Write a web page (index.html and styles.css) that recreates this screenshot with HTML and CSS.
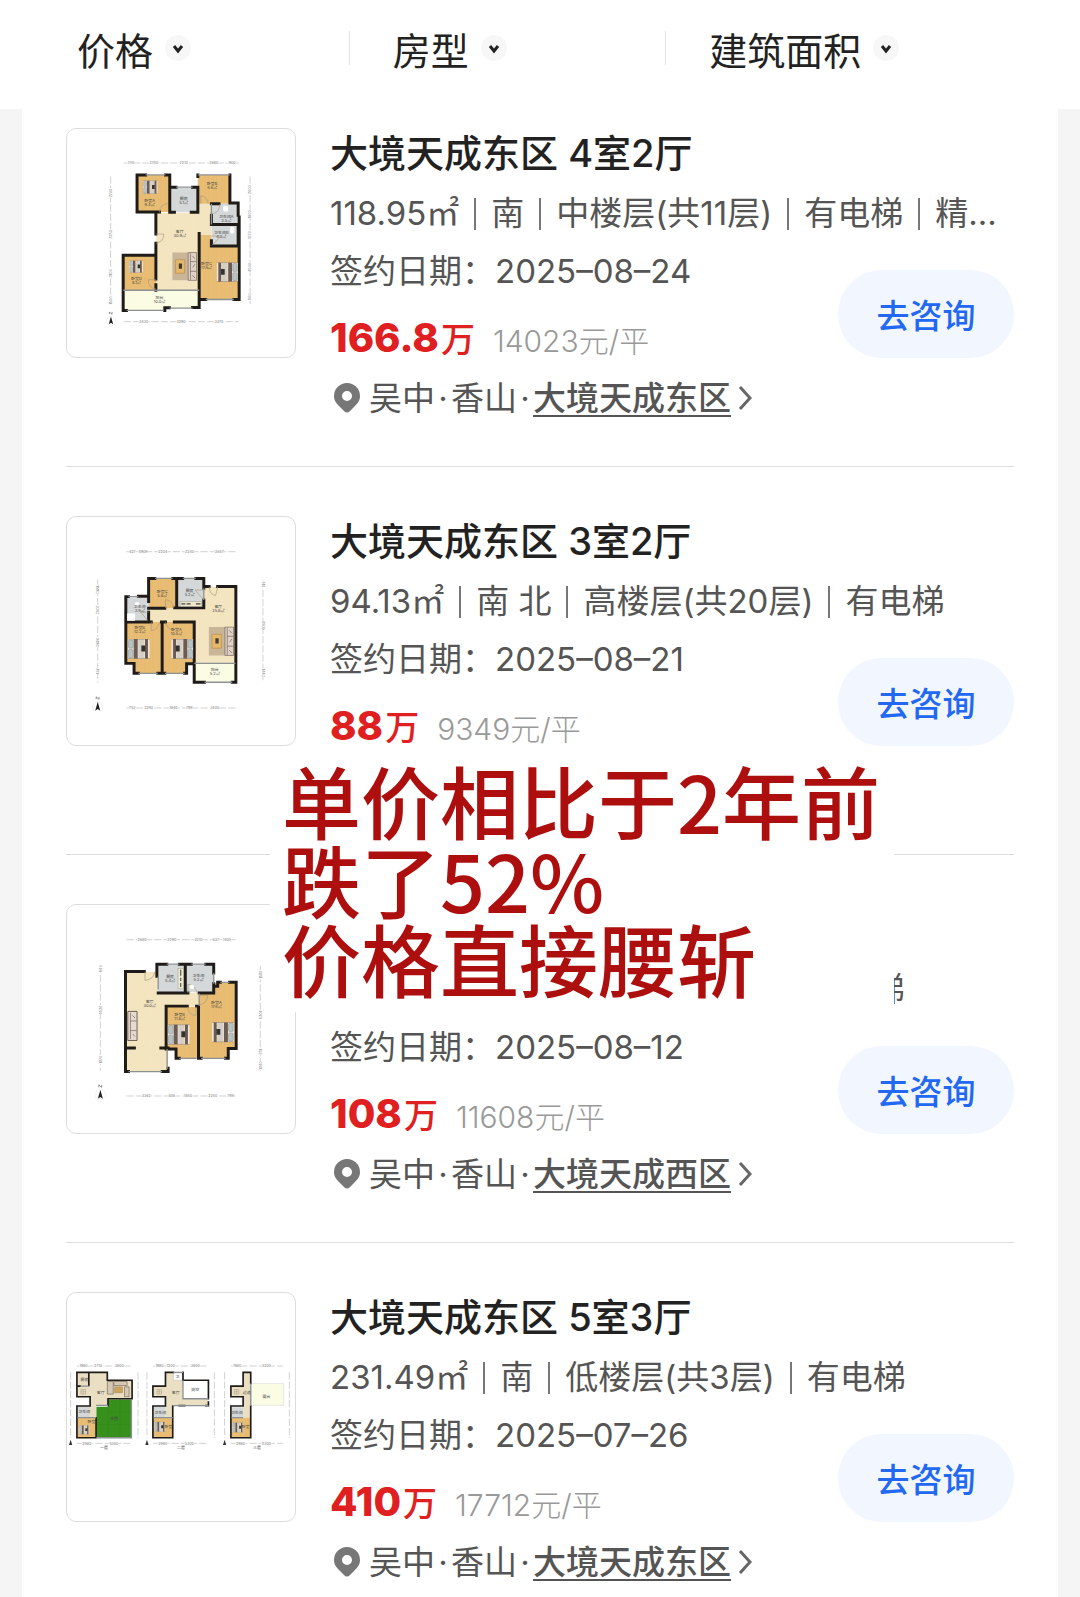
FILE: index.html
```
<!DOCTYPE html>
<html lang="zh-CN">
<head>
  <meta charset="UTF-8" />
  <meta name="viewport" content="width=device-width, initial-scale=1.0" />
  <title>大境天成 - 成交记录</title>
  <link rel="stylesheet" href="styles.css">
</head>
<body>
  <svg class="defs" aria-hidden="true">
    <defs>
      <pattern id="wood" width="24" height="24" patternUnits="userSpaceOnUse">
        <rect width="24" height="24" fill="#e9be74" />
        <path d="M0 0V24M8 0V24M16 0V24" stroke="#deb064" stroke-width="1" />
      </pattern>
      <pattern id="tile" width="28" height="28" patternUnits="userSpaceOnUse">
        <rect width="28" height="28" fill="#f4e5c1" />
        <path d="M0 0H28M0 0V28" stroke="#efdeb4" stroke-width="1" />
      </pattern>
      <symbol id="bed" viewBox="0 0 66 60">
        <rect width="66" height="60" fill="#ece7e0" />
        <rect x="2" y="3" width="14" height="25" rx="4" fill="#b8c3c6" stroke="#6d6f70" />
        <rect x="2" y="32" width="14" height="25" rx="4" fill="#b8c3c6" stroke="#6d6f70" />
        <path d="M18 0h12v60H18zM52 0h9v60h-9z" fill="#6b5b51" />
        <path d="M32 0h18v60H32z" fill="#d8cfc4" />
        <path d="M41 20h12v18H41z" fill="#333" />
        <path d="M0 0H66M0 60H66" stroke="#6b5b51" stroke-width="2" />
      </symbol>
      <symbol id="sofa" viewBox="0 0 76 90">
        <path d="M0 2h50v86H0z" fill="#c9b597" />
        <path d="M10 24h28v42H10z" fill="#e5b96d" stroke="#b98b45" stroke-width="2" />
        <path d="M20 36h10v16H20z" fill="#443a32" />
        <path d="M49 2h26v86H49z" fill="#e1d2c6" stroke="#6e5e55" stroke-width="2" />
        <path d="M56 4v82M56 30h18M56 60h18M62 12l8 9M62 72l8 9M70 38l-7 10" stroke="#6e5e55" stroke-width="2" fill="none" />
      </symbol>
      <symbol id="north" viewBox="0 0 40 52">
        <circle cx="20" cy="34" r="17" fill="none" stroke="#ddd" />
        <path d="M20 18l8 28-8-5-8 5z" fill="#222" />
        <path d="M15 10V2l9 8V2" fill="none" stroke="#555" stroke-width="2" />
      </symbol>
    </defs>
  </svg>

  <header class="filters">
    <button class="filter" type="button">价格
      <span class="filter-arrow"><svg viewBox="0 0 26 26"><path d="M9 11l4 5 4-5" /></svg></span>
    </button>
    <button class="filter" type="button">房型
      <span class="filter-arrow"><svg viewBox="0 0 26 26"><path d="M9 11l4 5 4-5" /></svg></span>
    </button>
    <button class="filter" type="button">建筑面积
      <span class="filter-arrow"><svg viewBox="0 0 26 26"><path d="M9 11l4 5 4-5" /></svg></span>
    </button>
  </header>

  <main class="list">
    <article class="item">
      <div class="thumb">
        <svg viewBox="20 24 690 690" role="img" aria-label="4室2厅户型图">
          <path class="dim" d="M192 127H540M192 607H540M152 168V560M574 168V560" />
          <g class="dim-text">
            <text x="214" y="131">1110</text><text x="283" y="131">2740</text><text x="373" y="131">2210</text><text x="464" y="131">2680</text><text x="520" y="131">900</text>
            <text x="252" y="611">3430</text><text x="365" y="611">3290</text><text x="480" y="611">3370</text>
            <text transform="translate(156 218) rotate(-90)">2700</text><text transform="translate(156 343) rotate(-90)">3750</text><text transform="translate(156 461) rotate(-90)">3100</text><text transform="translate(156 543) rotate(-90)">1500</text>
            <text transform="translate(578 208) rotate(-90)">2400</text><text transform="translate(578 282) rotate(-90)">1900</text><text transform="translate(578 345) rotate(-90)">1770</text><text transform="translate(578 443) rotate(-90)">4500</text><text transform="translate(578 532) rotate(-90)">900</text>
          </g>
          <path fill="url(#tile)" d="M290 278H418V250H457V345H420V512H290z" />
          <path fill="url(#wood)" d="M232 163H330V275H232zM416 163H513V250H416zM190 408H290V512H190zM420 375H540V540H420zM420 345H457V378H420z" />
          <path fill="#d5d8d9" d="M332 202H416V276H332zM458 250H540V313H458zM458 316H540V376H458z" />
          <path fill="#fbfce4" d="M190 513H420V566H312V573H190z" />
          <path class="wall" d="M258 163H232V275H300M318 163H331V276H345M331 200H350M400 200H416V276H396M416 168V163M513 163V248H538V285M457 250H480M457 313H538V378H457V362M457 313V285M289 276V342M289 370V406H190V573H200M289 406V478M289 495V512M420 340V564H400M316 573V565H330M541 290V540H525M420 540H440" />
          <path class="thin" d="M258 163H318M350 200H400M416 163H513M190 512H420M200 573H312M330 566H400M440 540H525M457 250V313" />
          <path class="door" d="M289 342h24q0 24-24 28M300 276q2-26 26-26M425 250v-24q20 2 22 24M462 280q20-4 20-28M457 348h30l-28 28M289 480h-24q2 26 24 28" />
          <use href="#bed" x="240" y="180" width="64" height="40" />
          <use href="#bed" x="196" y="422" width="66" height="37" />
          <use href="#bed" transform="translate(538 428) scale(-1 1)" width="66" height="58" />
          <use href="#sofa" x="338" y="396" width="76" height="88" />
          <rect x="492" y="256" width="16" height="18" rx="6" fill="#fff" /><rect x="514" y="320" width="12" height="20" rx="4" fill="#fff" />
          <g class="room">
            <text x="270" y="245">卧室A</text><text x="270" y="258">9.4㎡</text>
            <text x="373" y="239">厨房</text><text x="373" y="251">5.1㎡</text>
            <text x="459" y="194">卧室B</text><text x="459" y="206">6.6㎡</text>
            <text x="502" y="294">卫生间A</text><text x="502" y="305">3.5㎡</text>
            <text x="487" y="341">卫生间B</text><text x="487" y="353">4.2㎡</text>
            <text x="361" y="338">客厅</text><text x="361" y="350">30.9㎡</text>
            <text x="230" y="480">卧室D</text><text x="230" y="492">8.1㎡</text>
            <text x="442" y="437">卧室C</text><text x="442" y="449">17.6㎡</text>
            <text x="300" y="538">阳台</text><text x="300" y="550">10.0㎡</text>
          </g>
          <use href="#north" x="136" y="576" width="34" height="44" />
        </svg>
      </div>
      <div class="info">
        <h2 class="title">大境天成东区 4室2厅</h2>
        <p class="attrs">118.95㎡<i class="bar"></i>南<i class="bar"></i>中楼层(共11层)<i class="bar"></i>有电梯<i class="bar"></i>精装修</p>
        <div class="deal">
          <div>
            <p class="date">签约日期：2025–08–24</p>
            <p class="price"><b class="total">166.8<span class="wan">万</span></b><span class="unit">14023元/平</span></p>
          </div>
          <button class="ask" type="button">去咨询</button>
        </div>
        <p class="place">
          <svg class="pin" viewBox="0 0 26 30"><path d="M13 0a13 13 0 0 1 13 13c0 5-3 8-6 11l-4 4q-3 3-6 0l-4-4c-3-3-6-6-6-11A13 13 0 0 1 13 0zm0 8a5 5 0 1 0 0 10 5 5 0 0 0 0-10z" /></svg>
          <span>吴中<i class="dot">·</i>香山<i class="dot">·</i></span><a href="#">大境天成东区</a>
          <svg class="more" viewBox="0 0 14 24"><path d="M2 1l10 11L2 23" /></svg>
        </p>
      </div>
    </article>

    <article class="item">
      <div class="thumb">
        <svg viewBox="20 24 690 690" role="img" aria-label="3室2厅户型图">
          <path class="dim" d="M200 129H530M200 602H530M113 213V525M613 216V522" />
          <g class="dim-text">
            <text x="218" y="133">827</text><text x="250" y="133">4909</text><text x="310" y="133">2204</text><text x="391" y="133">2240</text><text x="481" y="133">2657</text>
            <text x="217" y="606">753</text><text x="267" y="606">2290</text><text x="342" y="606">1840</text><text x="390" y="606">799</text><text x="467" y="606">3400</text>
            <text transform="translate(109 243) rotate(90)">1580</text><text transform="translate(109 305) rotate(90)">2052</text><text transform="translate(109 403) rotate(90)">3486</text><text transform="translate(109 490) rotate(90)">751</text>
            <text transform="translate(609 228) rotate(90)">510</text><text transform="translate(609 352) rotate(90)">6509</text><text transform="translate(609 495) rotate(90)">1440</text>
          </g>
          <path fill="url(#tile)" d="M268 300H434V235H530V466H405V342H268z" />
          <path fill="url(#wood)" d="M268 210H352V300H268zM198 342H308V496H222V468H198zM310 342H405V468H382V496H310z" />
          <path fill="#d5d8d9" d="M354 210H434V298H354zM200 268H268V340H200z" />
          <path fill="#fbfce4" d="M406 468H530V524H406z" />
          <path class="wall" d="M286 210H267V264H236M206 265H198V467H223V497H236M340 210H370M410 210H434V240M450 234H438M476 234H531V524H520M267 264V280M267 300H316M346 299H434V275M352 210V298M267 312V342M198 342H275M306 342H318M345 342H405M308 345V496M295 497H316M376 497H382V468H405V524H436M405 342V468" />
          <path class="thin" d="M286 210H340M370 210H410M206 265H236M236 497H295M316 497H376M405 467H530M436 524H520M434 240V275" />
          <path class="door" d="M450 235q2 26 20 26l6-26M318 300v-26q22 2 24 26M434 245h-26l26 30M275 342v26q20-2 25-26M318 342q6 24 26 24M267 312h-24l22 26" />
          <rect x="362" y="279" width="66" height="16" fill="#efe9cc" stroke="#777" /><path d="M366 287h12M382 287h12M410 287h14" stroke="#444" stroke-width="4" />
          <rect x="202" y="316" width="24" height="22" fill="#fff" /><circle cx="232" cy="288" r="7" fill="#fff" />
          <use href="#bed" x="203" y="393" width="68" height="60" />
          <use href="#bed" transform="translate(403 393) scale(-1 1)" width="68" height="60" />
          <use href="#sofa" x="448" y="355" width="78" height="90" />
          <g class="room">
            <text x="308" y="254">卧室C</text><text x="308" y="266">5.8㎡</text>
            <text x="391" y="250">厨房</text><text x="391" y="262">5.2㎡</text>
            <text x="240" y="300">卫生间</text><text x="240" y="312">3.9㎡</text>
            <text x="478" y="300">客厅</text><text x="478" y="312">25.8㎡</text>
            <text x="240" y="363">卧室B</text><text x="240" y="375">12.2㎡</text>
            <text x="351" y="369">卧室A</text><text x="351" y="381">10.5㎡</text>
            <text x="467" y="491">阳台</text><text x="467" y="503">5.2㎡</text>
          </g>
          <use href="#north" x="94" y="566" width="38" height="50" />
        </svg>
      </div>
      <div class="info">
        <h2 class="title">大境天成东区 3室2厅</h2>
        <p class="attrs">94.13㎡<i class="bar"></i>南 北<i class="bar"></i>高楼层(共20层)<i class="bar"></i>有电梯</p>
        <div class="deal">
          <div>
            <p class="date">签约日期：2025–08–21</p>
            <p class="price"><b class="total">88<span class="wan">万</span></b><span class="unit">9349元/平</span></p>
          </div>
          <button class="ask" type="button">去咨询</button>
        </div>
        <p class="place covered">
          <svg class="pin" viewBox="0 0 26 30"><path d="M13 0a13 13 0 0 1 13 13c0 5-3 8-6 11l-4 4q-3 3-6 0l-4-4c-3-3-6-6-6-11A13 13 0 0 1 13 0zm0 8a5 5 0 1 0 0 10 5 5 0 0 0 0-10z" /></svg>
          <span>吴中<i class="dot">·</i>香山<i class="dot">·</i></span><a href="#">大境天成东区</a>
          <svg class="more" viewBox="0 0 14 24"><path d="M2 1l10 11L2 23" /></svg>
        </p>
      </div>
    </article>

    <article class="item">
      <div class="thumb">
        <svg viewBox="20 24 690 690" role="img" aria-label="2室2厅户型图">
          <path class="dim" d="M200 129H530M200 602H530M121 208V526M605 208V526" />
          <g class="dim-text">
            <text x="247" y="133">2680</text><text x="337" y="133">2290</text><text x="418" y="133">2210</text><text x="470" y="133">637</text><text x="504" y="133">1405</text>
            <text x="260" y="606">3362</text><text x="337" y="606">836</text><text x="386" y="606">1850</text><text x="461" y="606">2240</text><text x="515" y="606">799</text>
            <text transform="translate(125 217) rotate(-90)">640</text><text transform="translate(125 342) rotate(-90)">6520</text><text transform="translate(125 492) rotate(-90)">1870</text>
            <text transform="translate(609 235) rotate(-90)">1580</text><text transform="translate(609 357) rotate(-90)">5301</text><text transform="translate(609 468) rotate(-90)">751</text><text transform="translate(609 510) rotate(-90)">1340</text>
          </g>
          <path fill="url(#tile)" d="M197 226H296V290H420V330H320V458H326V528H197z" />
          <path fill="url(#wood)" d="M320 332H418V488H350V460H320zM420 290H460V260H532V458H508V488H420z" />
          <path fill="#d5d8d9" d="M296 204H376V288H296zM380 204H462V288H380z" />
          <path class="wall" d="M197 528V225H254M292 225V203H322M292 225V240M360 203H396M378 203V288M440 203H464V230M464 262V290H420M296 290H386M464 270H476V258H484M512 258H532V458H508V488H500M320 440V330H384M412 330H418V488H426M320 440V460H350V488H360M197 457H224M304 457H326M197 528H206M308 528H326V518" />
          <path class="thin" d="M322 203H360M396 203H440M296 240V280M464 230V262M484 258H512M360 488H412M426 488H500M206 528H308M323 460V520M420 292V330" />
          <path class="door" d="M256 226v26q26-2 30-26M386 290v-26q22 2 28 26M420 298h26q-2 24-24 28M384 332q4 26 26 26v-26" />
          <rect x="356" y="216" width="16" height="62" fill="#efe9cc" stroke="#777" /><path d="M364 220v18M364 244v10M364 260v12" stroke="#666" stroke-width="4" />
          <circle cx="398" cy="272" r="7" fill="#fff" />
          <path d="M204 346h28v88h-28z" fill="#e6dbcf" stroke="#6e5e55" stroke-width="3" />
          <path d="M212 350v80M212 375h18M212 404h18M218 358l8 8M218 414l8 8" stroke="#6e5e55" stroke-width="2" />
          <use href="#bed" x="324" y="386" width="68" height="60" />
          <use href="#bed" transform="translate(526 379) scale(-1 1)" width="68" height="60" />
          <g class="room">
            <text x="332" y="246">厨房</text><text x="332" y="258">5.4㎡</text>
            <text x="418" y="241">卫生间</text><text x="418" y="253">5.2㎡</text>
            <text x="270" y="320">客厅</text><text x="270" y="332">30.0㎡</text>
            <text x="361" y="361">卧室B</text><text x="361" y="373">11.8㎡</text>
            <text x="472" y="324">卧室A</text><text x="472" y="336">17.6㎡</text>
          </g>
          <use href="#north" x="102" y="566" width="38" height="50" />
        </svg>
      </div>
      <div class="info">
        <h2 class="title covered">大境天成西区 2室2厅</h2>
        <p class="attrs">93.04㎡<i class="bar"></i>南<i class="bar"></i>中楼层(共18层)<i class="bar"></i>有电梯</p>
        <div class="deal">
          <div>
            <p class="date">签约日期：2025–08–12</p>
            <p class="price"><b class="total">108<span class="wan">万</span></b><span class="unit">11608元/平</span></p>
          </div>
          <button class="ask" type="button">去咨询</button>
        </div>
        <p class="place">
          <svg class="pin" viewBox="0 0 26 30"><path d="M13 0a13 13 0 0 1 13 13c0 5-3 8-6 11l-4 4q-3 3-6 0l-4-4c-3-3-6-6-6-11A13 13 0 0 1 13 0zm0 8a5 5 0 1 0 0 10 5 5 0 0 0 0-10z" /></svg>
          <span>吴中<i class="dot">·</i>香山<i class="dot">·</i></span><a href="#">大境天成西区</a>
          <svg class="more" viewBox="0 0 14 24"><path d="M2 1l10 11L2 23" /></svg>
        </p>
      </div>
      <!-- 标注文字，浮在列表上 -->
      <div class="caption">单价相比于2年前<br />跌了52%<br />价格直接腰斩</div>
    </article>

    <article class="item">
      <div class="thumb">
        <svg viewBox="20 20 690 690" role="img" aria-label="5室3厅户型图">
          <path class="dim" d="M50 241H215M280 241H448M516 241H674M50 475H215M280 475H448M516 475H674M31 260V458M235 260V458M262 260V458M466 260V458M497 260V458M693 260V458" />
          <g class="dim-text">
            <text x="70" y="244">1980</text><text x="114" y="244">2710</text><text x="178" y="244">3800</text><text x="300" y="244">1980</text><text x="334" y="244">1200</text><text x="408" y="244">3800</text><text x="535" y="244">1980</text><text x="624" y="244">5200</text>
            <text x="80" y="479">2980</text><text x="162" y="479">5300</text><text x="310" y="479">2980</text><text x="390" y="479">5300</text><text x="545" y="479">2980</text><text x="624" y="479">5300</text>
          </g>
          <!-- 一层 -->
          <path fill="#eadfc2" d="M50 261H142V284H217V340H144V362H108V398H52V362H90V334H50z" />
          <path fill="#fff" d="M52 336H88V360H52z" />
          <path fill="#37901c" d="M144 342H216V456H109V364H144z" />
          <path d="M109 418H216M144 364V456M180 342V456M144 380H216" stroke="#2d8414" fill="none" />
          <path fill="#d5d8d9" d="M52 364H88V396H52z" /><path fill="url(#wood)" d="M50 398H108V456H50z" />
          <path class="wall small" d="M50 334V260H142V284H217V340H144V360M50 302H60M50 334H90V362H50V458H108V398M86 264V300" />
          <path class="thin" d="M60 302H86M52 397H108M108 360H144M109 458H215V342" />
          <path d="M142 288h18v38h-18zM162 288h40v12h-40zM194 304h14v30h-14z" fill="#d5c8b5" stroke="#776658" stroke-width="2" /><path d="M164 304h24v18h-24z" fill="#cda45a" stroke="#776658" />
          <use href="#bed" x="54" y="420" width="36" height="28" />
          <path d="M62 312h14v14H62zM69 312v14M62 319h14" fill="none" stroke="#807765" />
          <!-- 二层 -->
          <path fill="#eadfc2" d="M318 260H342V284H371V340H448V361H340V398H318V334H280V302H318z" />
          <path fill="#fff" stroke="#999" d="M342 262H372V284H342z" />
          <path fill="#d5d8d9" d="M282 364H318V396H282z" /><path fill="url(#wood)" d="M280 398H340V456H280z" />
          <path class="wall small" d="M342 260H318V302H280V334H318V362H280V458H340V362M371 284H448V340M371 260V284M360 361H376M440 361H448V350" />
          <path class="thin" d="M342 260H371M371 284V340H448M340 361H448M282 397H340" />
          <use href="#bed" x="284" y="410" width="34" height="30" />
          <path d="M292 312h14v14h-14zM299 312v14M292 319h14" fill="none" stroke="#807765" />
          <!-- 三层 -->
          <path fill="#eadfc2" d="M553 260H576V456H553V334H516V302H553z" />
          <path fill="#fbfce4" stroke="#ddd" stroke-width="2" d="M578 294H676V360H578z" />
          <path fill="#d5d8d9" d="M518 366H553V396H518z" /><path fill="url(#wood)" d="M516 398H576V456H516z" />
          <path class="wall small" d="M576 294V260H553V302H516V334H553V362H516V458H576V362M576 294V284" />
          <path class="thin" d="M576 294V362M518 397H553" />
          <use href="#bed" x="520" y="412" width="34" height="30" />
          <path d="M526 312h14v14h-14zM533 312v14M526 319h14" fill="none" stroke="#807765" />
          <g class="room">
            <text x="73" y="286">厨房</text><text x="122" y="326">客厅</text><text x="72" y="382">卫生间</text><text x="94" y="414">卧室</text><text x="162" y="404">花园</text>
            <text x="354" y="276">卫</text><text x="349" y="327">客厅</text><text x="408" y="317">挑空</text><text x="302" y="386">卫生间</text><text x="327" y="428">卧室</text>
            <text x="564" y="325">过道</text><text x="624" y="338">露台</text><text x="534" y="386">卫生间</text><text x="560" y="428">卧室</text>
            <text x="132" y="492">一层</text><text x="365" y="492">二层</text><text x="595" y="492">三层</text>
          </g>
          <path d="M31 464l5 16H26zM262 464l5 16h-10zM497 464l5 16h-10z" fill="#333" />
        </svg>
      </div>
      <div class="info">
        <h2 class="title">大境天成东区 5室3厅</h2>
        <p class="attrs">231.49㎡<i class="bar"></i>南<i class="bar"></i>低楼层(共3层)<i class="bar"></i>有电梯</p>
        <div class="deal">
          <div>
            <p class="date">签约日期：2025–07–26</p>
            <p class="price"><b class="total">410<span class="wan">万</span></b><span class="unit">17712元/平</span></p>
          </div>
          <button class="ask" type="button">去咨询</button>
        </div>
        <p class="place">
          <svg class="pin" viewBox="0 0 26 30"><path d="M13 0a13 13 0 0 1 13 13c0 5-3 8-6 11l-4 4q-3 3-6 0l-4-4c-3-3-6-6-6-11A13 13 0 0 1 13 0zm0 8a5 5 0 1 0 0 10 5 5 0 0 0 0-10z" /></svg>
          <span>吴中<i class="dot">·</i>香山<i class="dot">·</i></span><a href="#">大境天成东区</a>
          <svg class="more" viewBox="0 0 14 24"><path d="M2 1l10 11L2 23" /></svg>
        </p>
      </div>
    </article>
  </main>
</body>
</html>
```
FILE: styles.css
```
* {
  box-sizing: border-box;
}
body {
  margin: 0;
  min-height: 100vh;
  display: flex;
  flex-direction: column;
  background: #f5f5f5;
  color: #555;
  font-family: Inter, "Noto Sans CJK SC", sans-serif;
}
h2, p {
  margin: 0;
}
i {
  font-style: normal;
}
button {
  border: none;
  font-family: inherit;
  cursor: pointer;
}
.defs {
  position: absolute;
  width: 0;
  height: 0;
}

/* 筛选栏 */
.filters {
  display: grid;
  grid-template-columns: repeat(3, 1fr);
  align-items: center;
  height: 109px;
  padding: 0 98px 13px 32px;
  background: #fff;
}
.filter {
  display: flex;
  align-items: center;
  gap: 12px;
  height: 34px;
  padding: 0 0 0 45px;
  background: none;
  color: #222;
  font-size: 38px;
  white-space: nowrap;
}
.filter + .filter {
  padding-left: 43px;
  border-left: 1px solid #e3e3e3;
}
.filter-arrow {
  width: 26px;
  height: 26px;
  border-radius: 50%;
  background: #f7f7f7;
}
.filter-arrow svg {
  display: block;
  fill: none;
  stroke: #222;
  stroke-width: 3;
}

/* 列表 */
.list {
  flex: 1;
  margin: 0 22px;
  padding: 0 44px;
  background: #fff;
}
.item {
  position: relative;
  display: flex;
  align-items: flex-start;
  gap: 34px;
  padding: 49px 0 38px;
  border-bottom: 1px solid #ddd;
}
.item:first-child {
  padding-top: 19px;
}
.item:last-child {
  padding-bottom: 4px;
  border-bottom: none;
}
.thumb {
  flex: none;
  width: 230px;
  height: 230px;
  border: 1px solid #ddd;
  border-radius: 10px;
}
.thumb svg {
  display: block;
  width: 100%;
  height: 100%;
}
.info {
  flex: 1;
  min-width: 0;
}
.title {
  margin-bottom: 6px;
  color: #222;
  font-size: 38px;
  font-weight: 500;
  line-height: 50px;
}
.attrs, .date {
  font-size: 33px;
  line-height: 58px;
  white-space: nowrap;
}
.attrs {
  overflow: hidden;
  text-overflow: ellipsis;
  height: 58px;
}
.bar {
  display: inline-block;
  width: 2px;
  height: 32px;
  margin: 0 15px;
  background: #777;
  vertical-align: -5px;
}
.deal {
  display: flex;
  justify-content: space-between;
  align-items: flex-end;
}
.price {
  display: flex;
  align-items: baseline;
  gap: 18px;
  height: 60px;
  margin-top: 8px;
  line-height: 60px;
}
.total {
  color: #e02020;
  font-size: 40px;
  font-weight: 800;
}
.wan {
  margin-left: 2px;
  font-size: 34px;
  font-weight: 500;
}
.unit {
  color: #999;
  font-size: 30px;
  font-weight: 300;
}
.ask {
  width: 176px;
  height: 88px;
  margin-bottom: 10px;
  border-radius: 44px;
  background: #f2f6ff;
  color: #2268f2;
  font-size: 33px;
  font-weight: 500;
}
.place {
  display: flex;
  align-items: center;
  height: 60px;
  font-size: 33px;
  line-height: 60px;
  white-space: nowrap;
}
.pin {
  width: 26px;
  height: 30px;
  margin: 0 9px 0 4px;
  fill: #777;
}
.dot {
  display: inline-block;
  width: 16px;
  text-align: center;
}
.place a {
  color: #555;
  font-weight: 500;
  text-decoration: underline;
  text-decoration-thickness: 2px;
  text-underline-offset: 5px;
}
.more {
  width: 14px;
  height: 24px;
  margin-left: 7px;
  fill: none;
  stroke: #666;
  stroke-width: 3;
}

/* 标注 */
.caption {
  position: absolute;
  top: -98px;
  left: 204px;
  padding: 3px 14px 15px 12px;
  background: #fff;
  color: #ad0f0f;
  font-family: "Noto Sans CJK SC", sans-serif;
  font-size: 79px;
  font-weight: 500;
  line-height: 79px;
  white-space: nowrap;
}
.covered {
  visibility: hidden;
}

/* 户型图 */
.wall {
  fill: none;
  stroke: #1e1b18;
  stroke-width: 9;
  stroke-linecap: square;
}
.wall.small {
  stroke-width: 5;
}
.thin {
  fill: none;
  stroke: #8b9092;
  stroke-width: 4;
}
.door {
  fill: none;
  stroke: #a99a7c;
  stroke-width: 2;
}
.dim {
  fill: none;
  stroke: #bbb;
  stroke-width: 2;
  stroke-dasharray: 22 6;
}
.dim-text text, .room text {
  font-size: 12px;
  text-anchor: middle;
  fill: #444;
}
.dim-text text {
  stroke: #fff;
  stroke-width: 4;
  paint-order: stroke;
  font-size: 11px;
  fill: #777;
}
```
